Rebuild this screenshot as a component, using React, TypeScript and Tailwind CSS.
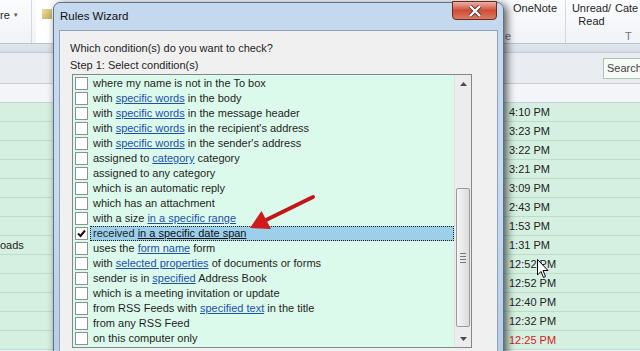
import React from 'react';

type Seg = string | { link: string };

const conditions: { parts: Seg[]; checked?: boolean }[] = [
  { parts: ['where my name is not in the To box'] },
  { parts: ['with ', { link: 'specific words' }, ' in the body'] },
  { parts: ['with ', { link: 'specific words' }, ' in the message header'] },
  { parts: ['with ', { link: 'specific words' }, " in the recipient's address"] },
  { parts: ['with ', { link: 'specific words' }, " in the sender's address"] },
  { parts: ['assigned to ', { link: 'category' }, ' category'] },
  { parts: ['assigned to any category'] },
  { parts: ['which is an automatic reply'] },
  { parts: ['which has an attachment'] },
  { parts: ['with a size ', { link: 'in a specific range' }] },
  { parts: ['received ', { link: 'in a specific date span' }], checked: true },
  { parts: ['uses the ', { link: 'form name' }, ' form'] },
  { parts: ['with ', { link: 'selected properties' }, ' of documents or forms'] },
  { parts: ['sender is in ', { link: 'specified' }, ' Address Book'] },
  { parts: ['which is a meeting invitation or update'] },
  { parts: ['from RSS Feeds with ', { link: 'specified text' }, ' in the title'] },
  { parts: ['from any RSS Feed'] },
  { parts: ['on this computer only'] },
];

const times = [
  '4:10 PM', '3:23 PM', '3:22 PM', '3:21 PM', '3:09 PM', '2:43 PM', '1:53 PM',
  '1:31 PM', '12:52 PM', '12:52 PM', '12:40 PM', '12:32 PM', '12:25 PM',
];

function ConditionRow({ parts, checked }: { parts: Seg[]; checked?: boolean }) {
  return (
    <div className="h-[15px] flex items-center pl-[1px]">
      <div className="w-[13px] h-[13px] border border-[#8e9092] bg-white flex items-center justify-center shrink-0">
        {checked ? (
          <svg width="9" height="9" viewBox="0 0 9 9">
            <path d="M1 4.5 L3.5 7 L8 1.5" stroke="#111" strokeWidth="2" fill="none" />
          </svg>
        ) : null}
      </div>
      <div
        className={
          checked
            ? 'ml-[2px] flex-1 h-[15px] flex items-center pl-[2px] bg-[#9bcfea] border border-dotted border-[#222] whitespace-pre'
            : 'ml-[2px] flex-1 h-[15px] flex items-center pl-[2px] border border-transparent whitespace-pre'
        }
      >
        {parts.map((p, i) =>
          typeof p === 'string' ? (
            <span key={i}>{p}</span>
          ) : (
            <span key={i} className={checked ? 'underline text-[#111]' : 'underline text-[#1b4fb0]'}>
              {p.link}
            </span>
          )
        )}
      </div>
    </div>
  );
}

export default function App() {
  return (
    <div className="w-[640px] h-[351px] relative overflow-hidden bg-[#eef1f5] text-[#1e1e1e] font-['Liberation_Sans',Arial,sans-serif] text-[11px] leading-none">
      {/* outlook ribbon */}
      <div className="h-[44px] flex bg-gradient-to-b from-[#fbfcfd] to-[#f0f3f7] border-b border-[#b9c3cf]">
        <div className="w-[32px] border-r border-[#d3d9e1] pt-[10px] flex items-start">
          <span className="text-[11px]">re</span>
          <span className="ml-[3px] mt-[2px] text-[6px] text-[#555]">▼</span>
        </div>
        <div className="w-[21px] ml-[4px] bg-white pt-[9px] pl-[6px]">
          <div className="w-[10px] h-[10px] bg-gradient-to-br from-[#e8d27a] to-[#b89a3c] opacity-80" />
        </div>
        <div className="flex-1" />
        <div className="w-[61px] flex flex-col border-r border-[#d3d9e1]">
          <div className="pl-[8px] pt-[3px] h-[31px]">OneNote</div>
          <div className="text-[#6b7480]">e</div>
        </div>
        <div className="w-[49px] pt-[3px] pl-[2px] flex flex-col items-center">
          <span>Unread/</span>
          <span className="mt-[2px]">Read</span>
        </div>
        <div className="w-[25px] pt-[3px] flex flex-col">
          <span>Cate</span>
          <span className="mt-[17px] ml-[10px] text-[#6b7480]">T</span>
        </div>
      </div>
      <div className="h-[9px] bg-gradient-to-b from-[#e1e6ec] to-[#d6dde6] border-b border-[#c2cad5]" />
      {/* search row */}
      <div className="h-[31px] flex items-center justify-end bg-[#e9edf2] border-b border-[#c6ced8]">
        <div className="w-[37px] h-[21px] bg-[#f7fbf8] border border-r-0 border-[#a9c7b0] flex items-center pl-[3px] text-[#444] overflow-hidden whitespace-nowrap">
          Search
        </div>
      </div>
      {/* header row */}
      <div className="h-[19px] bg-[#f3f5f8] border-b border-[#c8d0da]" />
      {/* message list */}
      <div className="flex flex-col bg-[#d5f0e0]">
        {times.map((t, i) => (
          <div key={i} className="h-[19px] flex items-center border-b border-[#bfdcca]">
            <div className="w-[509px]">{i === 7 ? 'oads' : ''}</div>
            <span className={i === times.length - 1 ? 'text-[#d41a1a]' : 'text-[#222]'}>{t}</span>
          </div>
        ))}
      </div>

      {/* rules wizard dialog */}
      <div className="absolute left-[53px] top-[2px] w-[451px] h-[360px] rounded-t-[7px] border border-[#5d738c] bg-gradient-to-b from-[#c4d8ee] via-[#c9dbef] to-[#b7cde6] shadow-[3px_2px_9px_rgba(0,0,0,0.65)] flex flex-col">
        <div className="h-[27px] flex items-center pl-[6px] relative">
          <span className="text-[11.5px] text-[#111]">Rules Wizard</span>
          <div className="absolute right-[6px] top-[-2px] w-[45px] h-[19px] rounded-b-[4px] border border-[#6b2a22] bg-gradient-to-b from-[#eab0a4] via-[#cf4d36] to-[#db7a62] flex items-center justify-center">
            <svg width="14" height="12" viewBox="0 0 14 12">
              <path d="M2 1 L12 11 M12 1 L2 11" stroke="#5a3030" strokeWidth="4" />
              <path d="M2 1 L12 11 M12 1 L2 11" stroke="#fff" strokeWidth="2.4" />
            </svg>
          </div>
        </div>
        <div className="mx-[5px] flex-1 bg-[#f0f0f0] border border-[#8fa2b8] pt-[10px] pl-[10px] pr-[25px]">
          <div className="h-[15px] flex items-center">Which condition(s) do you want to check?</div>
          <div className="h-[15px] flex items-center mt-[2px]">Step 1: Select condition(s)</div>
          <div className="mt-[1px] ml-[2px] h-[274px] border border-[#828790] bg-[#dcfaeb] flex">
            <div className="flex-1 pt-[1px] pl-[1px]">
              {conditions.map((c, i) => (
                <ConditionRow key={i} parts={c.parts} checked={c.checked} />
              ))}
            </div>
            <div className="w-[17px] bg-[#ececec] border-l border-[#e2e2e2] flex flex-col">
              <div className="h-[17px] flex items-center justify-center">
                <svg width="7" height="4" viewBox="0 0 7 4"><path d="M0 4 L3.5 0 L7 4 Z" fill="#4a4a4a" /></svg>
              </div>
              <div className="h-[96px]" />
              <div className="h-[139px] mx-[1px] rounded-[2px] border border-[#9a9a9a] bg-gradient-to-r from-[#f4f4f4] to-[#dcdcdc] flex flex-col items-center justify-center gap-[2px]">
                <div className="w-[6px] h-[1px] bg-[#777]" />
                <div className="w-[6px] h-[1px] bg-[#777]" />
                <div className="w-[6px] h-[1px] bg-[#777]" />
                <div className="w-[6px] h-[1px] bg-[#777]" />
              </div>
              <div className="flex-1" />
              <div className="h-[17px] flex items-center justify-center">
                <svg width="7" height="4" viewBox="0 0 7 4"><path d="M0 0 L3.5 4 L7 0 Z" fill="#4a4a4a" /></svg>
              </div>
            </div>
          </div>
        </div>
      </div>

      {/* red annotation arrow */}
      <svg className="absolute left-0 top-0 pointer-events-none" width="640" height="351">
        <line x1="313" y1="197" x2="264" y2="221" stroke="#c3161a" strokeWidth="4" strokeLinecap="round" />
        <path d="M250 228 L261.5 211 L271 229 Z" fill="#d01a1c" />
      </svg>

      {/* mouse cursor */}
      <svg className="absolute left-[537px] top-[259px]" width="12" height="20" viewBox="0 0 12 20">
        <path d="M0.5 0.5 L0.5 16 L4 12.5 L6.5 18.5 L8.5 17.5 L6 11.5 L11 11.5 Z" fill="#fff" stroke="#000" strokeWidth="1" />
      </svg>
    </div>
  );
}
